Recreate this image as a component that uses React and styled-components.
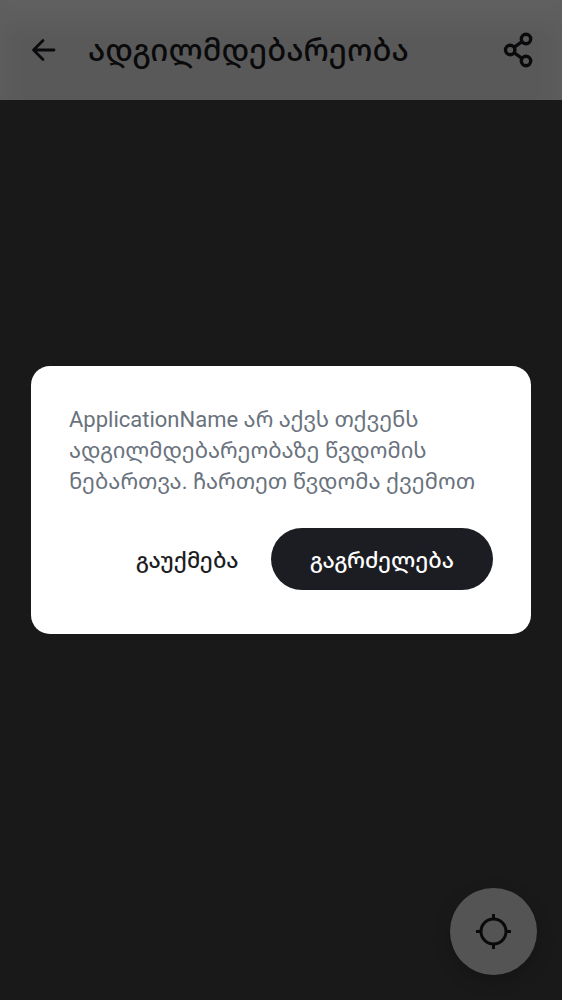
import React from "react";
import styled, { createGlobalStyle } from "styled-components";

const GlobalStyle = createGlobalStyle`
  *, *::before, *::after { box-sizing: border-box; }
  body {
    margin: 0;
    background: #3f3f3f;
    font-family: Roboto, "Noto Sans Georgian", "Noto Sans", "DejaVu Sans", sans-serif;
  }
  button { font-family: inherit; border: 0; padding: 0; background: none; cursor: pointer; }
  svg { display: block; }
`;

const Screen = styled.div`
  min-height: 100vh;
  display: flex;
  flex-direction: column;
`;

const TopBar = styled.header`
  display: flex;
  align-items: center;
  height: 100px;
  padding: 0 25px;
  color: #1a1b20;
  background: linear-gradient(#f2f2f2, #dfdfdf 40px);
  box-shadow: inset 24px 0 20px -20px #ececec, inset -24px 0 20px -20px #ececec;
`;

const IconButton = styled.button`
  display: grid;
  place-items: center;
  width: 38px;
  height: 38px;
  flex: none;
  color: inherit;
`;

const Title = styled.h1`
  flex: 1;
  margin: 0;
  padding: 2px 0 0 25px;
  font-size: 31px;
  line-height: 40px;
  font-weight: 500;
  white-space: nowrap;
`;

const MapArea = styled.main`
  flex: 1;
  display: flex;
  align-items: flex-end;
  justify-content: flex-end;
  padding: 25px;
`;

const LocateButton = styled.button`
  display: grid;
  place-items: center;
  width: 87px;
  height: 87px;
  border-radius: 50%;
  color: #1a1b20;
  background: #d2d2d2;
  box-shadow: 0 6px 18px rgba(0, 0, 0, 0.2);
`;

const Scrim = styled.div`
  position: fixed;
  inset: 0;
  display: flex;
  align-items: center;
  justify-content: center;
  padding: 31px;
  background: rgba(0, 0, 0, 0.6);
`;

const Dialog = styled.section`
  width: 100%;
  max-width: 560px;
  padding: 38px 38px 44px;
  border-radius: 19px;
  background: #fff;
`;

const Message = styled.p`
  margin: 0 0 31px;
  font-size: 22px;
  line-height: 31px;
  color: #69727d;
`;

const Actions = styled.div`
  display: flex;
  justify-content: flex-end;
  align-items: center;
`;

const ActionButton = styled.button`
  height: 62px;
  padding: 2px ${(p) => (p.$primary ? 39 : 32)}px 0;
  border-radius: 31px;
  font-size: 22px;
  line-height: 31px;
  font-weight: 500;
  white-space: nowrap;
  color: ${(p) => (p.$primary ? "#fff" : "#1c1d22")};
  && { background: ${(p) => (p.$primary ? "#1c1d22" : "transparent")}; }
`;

const BackIcon = () => (
  <svg width="26" height="26" viewBox="0 0 26 26" fill="none" stroke="currentColor" strokeWidth="2.800" strokeLinecap="round" strokeLinejoin="round" aria-hidden="true">
    <path d="M12 3.500 2.500 13l9.500 9.500M3 13h20" />
  </svg>
);

const ShareIcon = () => (
  <svg width="38" height="38" viewBox="0 0 38 38" fill="none" stroke="currentColor" strokeWidth="3.400" aria-hidden="true">
    <circle cx="11.200" cy="19" r="4.700" />
    <circle cx="27" cy="8" r="4.700" />
    <circle cx="27" cy="30" r="4.700" />
    <path d="m15 16.300 8-5.600M15 21.700l8 5.600" />
  </svg>
);

const LocateIcon = () => (
  <svg width="35" height="35" viewBox="0 0 35 35" fill="none" stroke="currentColor" strokeWidth="3" aria-hidden="true">
    <circle cx="17.500" cy="17.500" r="12.500" />
    <path d="M17.500 0v6M17.500 29v6M0 17.500h6M29 17.500h6" />
  </svg>
);

export default function App() {
  return (
    <>
      <GlobalStyle />
      <Screen lang="ka">
        <TopBar>
          <IconButton type="button" aria-label="უკან">
            <BackIcon />
          </IconButton>
          <Title>ადგილმდებარეობა</Title>
          <IconButton type="button" aria-label="გაზიარება">
            <ShareIcon />
          </IconButton>
        </TopBar>
        <MapArea>
          <LocateButton type="button" aria-label="ჩემი მდებარეობა">
            <LocateIcon />
          </LocateButton>
        </MapArea>
        <Scrim>
          <Dialog role="dialog" aria-modal="true" aria-describedby="permission-message">
            <Message id="permission-message">
              ApplicationName არ აქვს თქვენს ადგილმდებარეობაზე წვდომის ნებართვა. ჩართეთ წვდომა ქვემოთ
            </Message>
            <Actions>
              <ActionButton type="button">გაუქმება</ActionButton>
              <ActionButton type="button" $primary>გაგრძელება</ActionButton>
            </Actions>
          </Dialog>
        </Scrim>
      </Screen>
    </>
  );
}
